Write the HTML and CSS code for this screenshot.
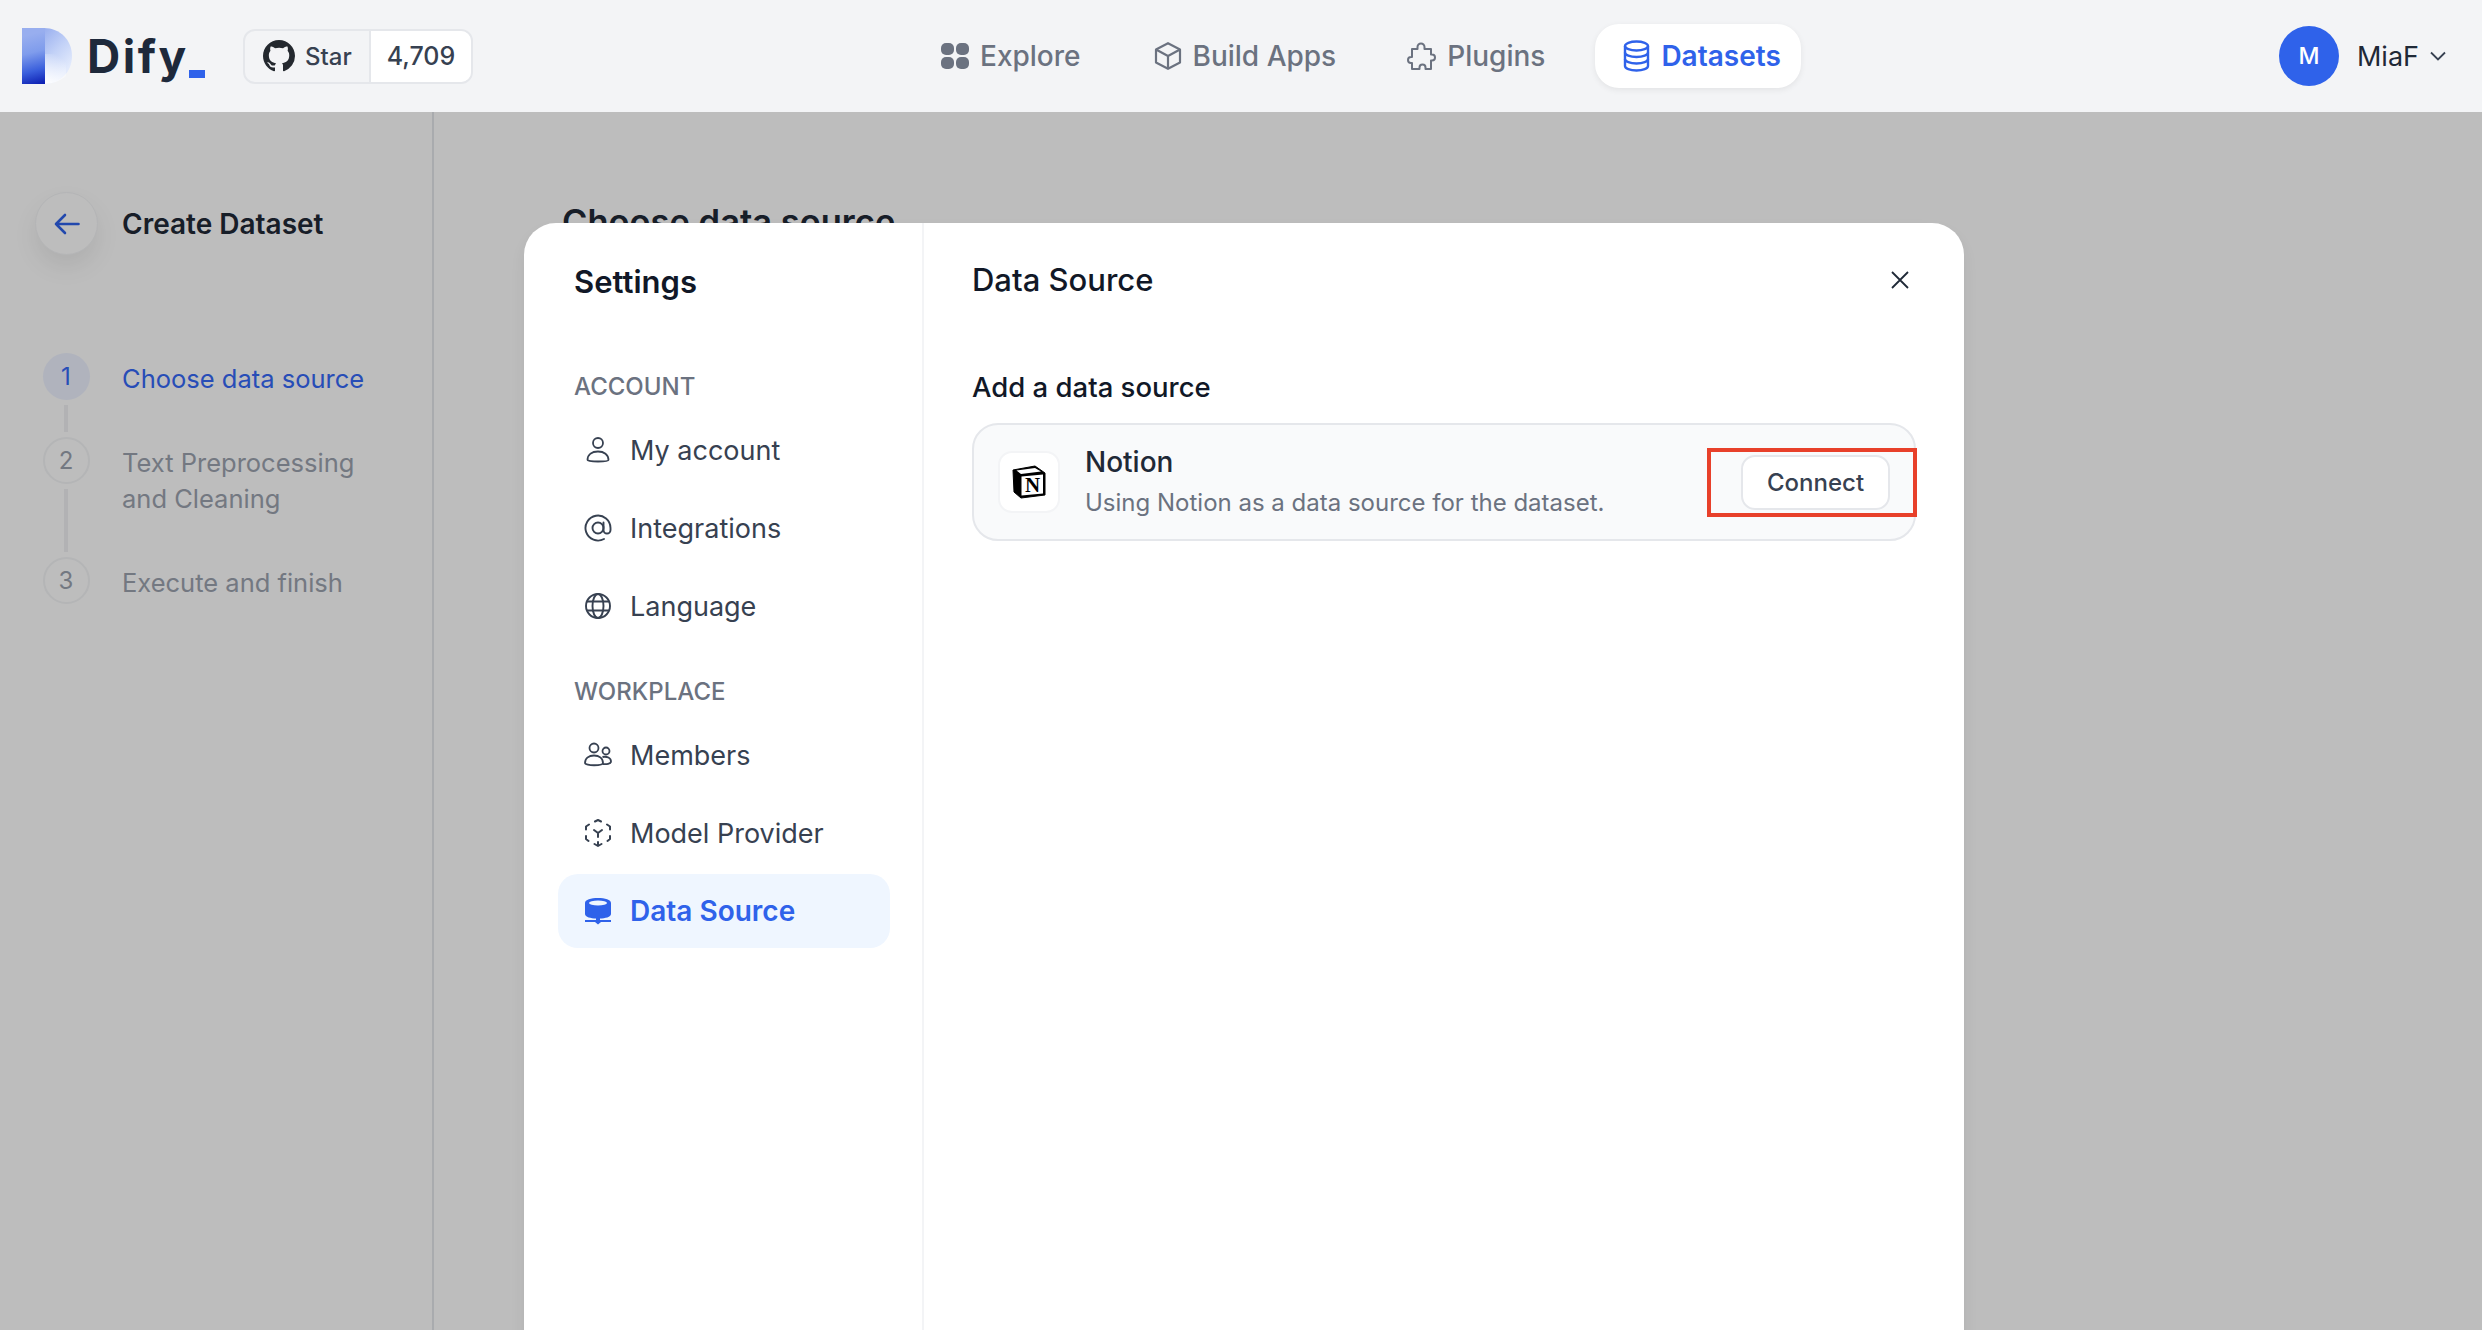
FILE: index.html
```html
<!DOCTYPE html>
<html lang="en">
  <head>
    <meta charset="UTF-8" />
    <meta name="viewport" content="width=device-width, initial-scale=1.0" />
    <title>Dify</title>
    <link rel="stylesheet" href="styles.css">
  </head>
  <body>
    <header class="topbar">
      <div class="logo">
        <svg class="logo-mark" viewBox="0 0 50 56">
          <defs>
            <linearGradient id="logoBowl" gradientUnits="userSpaceOnUse" x1="18" y1="4" x2="50" y2="36">
              <stop offset="0" stop-color="#98aeef" />
              <stop offset="0.55" stop-color="#c3d2f7" />
              <stop offset="1" stop-color="#e2eafc" />
            </linearGradient>
            <linearGradient id="logoStem" gradientUnits="userSpaceOnUse" x1="23" y1="56" x2="10" y2="6">
              <stop offset="0" stop-color="#0a1cb0" />
              <stop offset="0.3" stop-color="#3a5fdc" />
              <stop offset="0.65" stop-color="#7f9cec" />
              <stop offset="1" stop-color="#98aeef" />
            </linearGradient>
            <linearGradient id="logoFade" gradientUnits="userSpaceOnUse" x1="24" y1="56" x2="42" y2="32">
              <stop offset="0" stop-color="#fff" />
              <stop offset="1" stop-color="#fff" stop-opacity="0" />
            </linearGradient>
          </defs>
          <path d="M0 0H22C38 0 50 12 50 28S38 56 22 56H0Z" fill="url(#logoBowl)" />
          <path d="M23 26H44V48C38 53 30 56 22 56H23Z" fill="url(#logoFade)" />
          <path d="M0 0H23V56H0Z" fill="url(#logoStem)" />
        </svg>
        <span class="logo-word">Dify</span><span class="logo-dash"></span>
      </div>
      <div class="star-box">
        <div class="star-label">
          <svg class="github-icon" viewBox="0 0 16 16"><path fill="#24292f" d="M8 0C3.58 0 0 3.58 0 8c0 3.54 2.29 6.53 5.47 7.59.4.07.55-.17.55-.38 0-.19-.01-.82-.01-1.49-2.01.37-2.53-.49-2.69-.94-.09-.23-.48-.94-.82-1.13-.28-.15-.68-.52-.01-.53.63-.01 1.08.58 1.23.82.72 1.21 1.87.87 2.33.66.07-.52.28-.87.51-1.07-1.78-.2-3.64-.89-3.64-3.95 0-.87.31-1.59.82-2.15-.08-.2-.36-1.02.08-2.12 0 0 .67-.21 2.2.82.64-.18 1.32-.27 2-.27s1.36.09 2 .27c1.53-1.04 2.2-.82 2.2-.82.44 1.1.16 1.92.08 2.12.51.56.82 1.27.82 2.15 0 3.07-1.87 3.75-3.65 3.95.29.25.54.73.54 1.48 0 1.07-.01 1.93-.01 2.2 0 .21.15.46.55.38A8.01 8.01 0 0 0 16 8c0-4.42-3.58-8-8-8z"/></svg>
          <span>Star</span>
        </div>
        <div class="star-count">4,709</div>
      </div>
      <nav class="main-nav">
        <a class="nav-item">
          <svg class="nav-icon" viewBox="0 0 28 28" fill="#6b7280"><rect x="0" y="1" width="13" height="12" rx="5"/><rect x="15" y="1" width="13" height="12" rx="5"/><rect x="0" y="15" width="13" height="12" rx="5"/><rect x="15" y="15" width="13" height="12" rx="5"/></svg>
          Explore
        </a>
        <a class="nav-item nav-item-build">
          <svg class="nav-icon" viewBox="0 0 28 28" fill="none" stroke="#6b7280" stroke-width="2.2" stroke-linejoin="round"><path d="M14 1.2 26 7.5V20.5L14 26.8 2 20.5V7.5Z"/><path d="M2 7.5 14 14 26 7.5M14 14V26.8"/></svg>
          Build Apps
        </a>
        <a class="nav-item">
          <svg class="nav-icon nav-icon-plugin" viewBox="0 0 30 31" fill="none" stroke="#6b7280" stroke-width="2" stroke-linejoin="round"><path d="M6 8H11.5V6a3.5 3.5 0 0 1 7 0V8H25V13.5H26a3 3 0 0 1 0 6H25V28H19.500V26.500a3 3 0 0 0-6 0V28H6V22H5a3 3 0 0 1 0-6H6Z"/></svg>
          Plugins
        </a>
        <a class="nav-item nav-item-active">
          <svg class="nav-icon nav-icon-db" viewBox="0 0 27 32" fill="none" stroke="#2f62ea" stroke-width="2.4"><ellipse cx="13.5" cy="6" rx="11.5" ry="4.5"/><path d="M2 6V26C2 28.5 7 30.5 13.5 30.5S25 28.5 25 26V6"/><path d="M2 12.5C2 15 7 17 13.5 17S25 15 25 12.5M2 19C2 21.5 7 23.5 13.5 23.5S25 21.5 25 19"/></svg>
          Datasets
        </a>
      </nav>
      <div class="user-menu">
        <div class="avatar">M</div>
        <span class="user-name">MiaF</span>
        <svg class="chevron" viewBox="0 0 16 10" fill="none" stroke="#374151" stroke-width="1.8"><path d="M1 1.5 8 8.5 15 1.5"/></svg>
      </div>
    </header>

    <main class="page">
      <aside class="sidebar">
        <div class="back-row">
          <div class="back-btn">
            <svg viewBox="0 0 26 22" fill="none" stroke="#2f62ea" stroke-width="2.6" stroke-linecap="round" stroke-linejoin="round"><path d="M24.5 11H2M11 2 2 11 11 20"/></svg>
          </div>
          <span class="back-title">Create Dataset</span>
        </div>
        <div class="steps">
          <div class="step">
            <div class="step-rail"><div class="step-num step-num-active">1</div><div class="step-line"></div></div>
            <div class="step-text step-text-active">Choose data source</div>
          </div>
          <div class="step step-long">
            <div class="step-rail"><div class="step-num">2</div><div class="step-line"></div></div>
            <div class="step-text">Text Preprocessing<br>and Cleaning</div>
          </div>
          <div class="step">
            <div class="step-rail"><div class="step-num">3</div></div>
            <div class="step-text">Execute and finish</div>
          </div>
        </div>
      </aside>
      <section class="content">
        <h2 class="content-title">Choose data source</h2>
      </section>

      <div class="overlay">
        <div class="modal">
          <div class="modal-nav">
            <h3 class="modal-nav-title">Settings</h3>
            <div class="group-label group-label-first">ACCOUNT</div>
            <a class="menu-item">
              <svg class="menu-icon" viewBox="0 0 28 28" fill="none" stroke="#374151" stroke-width="1.8"><circle cx="14" cy="7" r="5"/><path d="M3.5 24C3.5 18.5 8 15.5 14 15.5S24.5 18.5 24.5 24C24.5 26 3.5 26 3.5 24Z"/></svg>
              My account
            </a>
            <a class="menu-item">
              <svg class="menu-icon" viewBox="0 0 28 28" fill="none" stroke="#374151" stroke-width="1.9" stroke-linecap="round"><circle cx="14" cy="14" r="5.5"/><path d="M19.5 8.5V16a3.5 3.5 0 0 0 7 0V14A12.5 12.5 0 1 0 20 25"/></svg>
              Integrations
            </a>
            <a class="menu-item">
              <svg class="menu-icon" viewBox="0 0 28 28" fill="none" stroke="#374151" stroke-width="1.9"><circle cx="14" cy="14" r="12"/><ellipse cx="14" cy="14" rx="5.5" ry="12"/><path d="M3 9.5H25M3 18.5H25"/></svg>
              Language
            </a>
            <div class="group-label">WORKPLACE</div>
            <a class="menu-item">
              <svg class="menu-icon" viewBox="0 0 28 28" fill="none" stroke="#374151" stroke-width="1.8"><circle cx="10" cy="7" r="4.5"/><circle cx="22" cy="10" r="3.5"/><path d="M1 22C1 17 5 14.5 10 14.5S19 17 19 22C19 25 1 25 1 22Z"/><path d="M18.5 16C23 15 27 17 27 20.5C27 23 22 23.5 19 23"/></svg>
              Members
            </a>
            <a class="menu-item">
              <svg class="menu-icon" viewBox="0 0 28 28" fill="none" stroke="#374151" stroke-width="2" stroke-linecap="round" stroke-linejoin="round"><path d="M11 2.5 14 1 17 2.5M23 5.5 26 7.5V10.5M26 17V20L23.5 22M2 17V20L4.5 22M2 10.5V7.5L5 5.5M10.5 25 14 27 17.5 25M14 27V23"/><path d="M10 11 14 14 18 11M14 14V18"/></svg>
              Model Provider
            </a>
            <a class="menu-item menu-item-active">
              <svg class="menu-icon" viewBox="0 0 28 28" fill="#2f62ea"><path d="M1 6C1 2.5 7 1 14 1S27 2.5 27 6V17C27 20 21 21.5 16 21.5V23H27V25H17L14 27.5 11 25H1V23H12V21.5C7 21.5 1 20 1 17Z"/><ellipse cx="14" cy="6" rx="9" ry="2.5" fill="#eff6ff"/></svg>
              Data Source
            </a>
          </div>
          <div class="modal-body">
            <div class="modal-head">
              <h3 class="modal-title">Data Source</h3>
              <svg class="close-icon" viewBox="0 0 18 18" fill="none" stroke="#1f2937" stroke-width="1.8"><path d="M1 1 17 17M17 1 1 17"/></svg>
            </div>
            <div class="section-title">Add a data source</div>
            <div class="source-card">
              <div class="source-logo">
                <svg viewBox="0 0 34 34">
                  <path d="M1 5 23 1 33 8V30L9 33 2 27Z" fill="#000" stroke="#000" stroke-linejoin="round"/>
                  <path d="M4.5 5.5 23 3 29 6.5 9 9Z" fill="#fff"/>
                  <path d="M9.5 11.5 31 9.5V28.5L9.5 30.5Z" fill="#fff"/>
                  <text x="20.5" y="27" class="notion-n">N</text>
                </svg>
              </div>
              <div class="source-info">
                <div class="source-name">Notion</div>
                <div class="source-desc">Using Notion as a data source for the dataset.</div>
              </div>
              <div class="connect-btn">Connect</div>
              <div class="highlight-box"></div>
            </div>
          </div>
        </div>
      </div>
    </main>
  </body>
</html>
```

FILE: styles.css
```css
* {
  box-sizing: border-box;
}

html,
body {
  height: 100%;
}

body {
  margin: 0;
  display: flex;
  flex-direction: column;
  overflow: hidden;
  font-family: Inter, "Noto Sans", sans-serif;
  color: #1f2937;
  background: #fff;
}

svg {
  display: block;
  flex-shrink: 0;
}

/* top bar */
.topbar {
  height: 112px;
  flex-shrink: 0;
  display: flex;
  align-items: center;
  padding-left: 22px;
  background: #f3f4f6;
}

.logo {
  display: flex;
  align-items: flex-end;
  width: 221px;
}

.logo-mark {
  width: 50px;
  height: 56px;
}

.logo-word {
  margin-left: 15px;
  font-size: 46px;
  line-height: 56px;
  font-weight: 700;
  letter-spacing: 2.5px;
  color: #1e293b;
}

.logo-dash {
  width: 16px;
  height: 8px;
  margin: 0 0 6px 0;
  background: #2f62ea;
}

.star-box {
  width: 230px;
  height: 55px;
  display: flex;
  border: 2px solid #e5e7eb;
  border-radius: 12px;
  overflow: hidden;
  font-size: 24px;
  font-weight: 500;
  color: #374151;
}

.star-label {
  width: 126px;
  display: flex;
  align-items: center;
  gap: 10px;
  padding-left: 18px;
  border-right: 2px solid #e5e7eb;
}

.github-icon {
  width: 32px;
  height: 32px;
}

.star-count {
  flex: 1;
  display: flex;
  align-items: center;
  justify-content: center;
  background: #fff;
  font-size: 25px;
}

.main-nav {
  display: flex;
  align-items: center;
  margin-left: 446px;
  gap: 26px;
}

.nav-item {
  height: 64px;
  display: flex;
  align-items: center;
  gap: 11px;
  padding: 0 22px;
  border-radius: 24px;
  font-size: 28px;
  font-weight: 500;
  color: #6b7280;
}

.nav-item-build {
  margin-left: 3px;
}

.nav-item-active {
  margin-left: 2px;
  padding: 0 20px 0 28px;
  background: #fff;
  color: #2f62ea;
  font-weight: 600;
  box-shadow: 0 2px 6px rgba(0, 0, 0, 0.07);
}

.nav-icon {
  width: 28px;
  height: 28px;
}

.nav-icon-plugin {
  width: 30px;
  height: 31px;
}

.nav-icon-db {
  width: 27px;
  height: 32px;
}

.user-menu {
  display: flex;
  align-items: center;
  margin-left: auto;
  padding-right: 36px;
}

.avatar {
  width: 60px;
  height: 60px;
  display: flex;
  align-items: center;
  justify-content: center;
  border-radius: 50%;
  background: #2f62ea;
  color: #fff;
  font-size: 23px;
  font-weight: 500;
}

.user-name {
  margin-left: 18px;
  font-size: 27px;
  color: #1f2937;
}

.chevron {
  width: 16px;
  height: 10px;
  margin-left: 11px;
}

/* page under the dialog */
.page {
  flex: 1;
  display: flex;
  position: relative;
  overflow: hidden;
  min-height: 0;
}

.sidebar {
  width: 434px;
  flex-shrink: 0;
  padding: 80px 0 0 35px;
  border-right: 2px solid #e5e7eb;
}

.back-row {
  display: flex;
  align-items: center;
  gap: 24px;
}

.back-btn {
  width: 63px;
  height: 63px;
  display: flex;
  align-items: center;
  justify-content: center;
  border: 1px solid #f3f4f6;
  border-radius: 50%;
  background: #fff;
  box-shadow: 0 12px 24px rgba(0, 0, 0, 0.08);
}

.back-btn svg {
  width: 26px;
  height: 22px;
}

.back-title {
  font-size: 28px;
  font-weight: 600;
}

.steps {
  margin-top: 98px;
}

.step {
  display: flex;
  height: 84px;
  margin-left: 7px;
}

.step-long {
  height: 120px;
}

.step-rail {
  width: 48px;
  display: flex;
  flex-direction: column;
  align-items: center;
}

.step-num {
  width: 47px;
  height: 47px;
  flex-shrink: 0;
  display: flex;
  align-items: center;
  justify-content: center;
  border: 2px solid #f3f4f6;
  border-radius: 50%;
  font-size: 24px;
  color: #9ca3af;
}

.step-num-active {
  border: 0;
  background: #eef2ff;
  color: #3568f7;
}

.step-line {
  flex: 1;
  width: 4px;
  margin: 5px 0;
  background: #f0f1f3;
}

.step-text {
  margin-left: 32px;
  padding-top: 8px;
  font-size: 25.5px;
  line-height: 36px;
  color: #9ca3af;
}

.step-text-active {
  color: #3568f7;
}

.content {
  flex: 1;
  padding: 0 128px;
}

.content-title {
  margin: 88px 0 0;
  font-size: 34.5px;
  line-height: 44px;
  font-weight: 600;
}

/* dialog */
.overlay {
  position: absolute;
  inset: 0;
  background: rgba(0, 0, 0, 0.26);
}

.modal {
  position: absolute;
  top: 111px;
  left: 524px;
  width: 1440px;
  height: 1300px;
  display: flex;
  border-radius: 32px;
  background: #fff;
  box-shadow: 0 8px 16px rgba(0, 0, 0, 0.06);
}

.modal-nav {
  width: 400px;
  flex-shrink: 0;
  padding: 35px 32px 0 34px;
  border-right: 2px solid #f3f4f6;
}

.modal-nav-title {
  margin: 0 0 0 16px;
  font-size: 31px;
  line-height: 48px;
  font-weight: 600;
  color: #111827;
}

.group-label {
  margin: 31px 0 0 16px;
  font-size: 24px;
  line-height: 36px;
  font-weight: 500;
  color: #6b7280;
}

.group-label-first {
  margin-top: 63px;
}

.menu-item {
  height: 74px;
  margin-top: 4px;
  display: flex;
  align-items: center;
  gap: 18px;
  padding-left: 26px;
  border-radius: 20px;
  font-size: 27px;
  color: #374151;
}

.group-label + .menu-item {
  margin-top: 8px;
}

.menu-item-active {
  background: #eff6ff;
  color: #2f62ea;
  font-size: 28px;
  font-weight: 600;
}

.menu-icon {
  width: 28px;
  height: 28px;
}

.modal-body {
  flex: 1;
  padding: 34px 48px 0 48px;
}

.modal-head {
  display: flex;
  align-items: center;
  justify-content: space-between;
}

.modal-title {
  margin: 0;
  font-size: 31px;
  line-height: 46px;
  font-weight: 500;
  color: #111827;
}

.close-icon {
  width: 18px;
  height: 18px;
  margin-right: 7px;
}

.section-title {
  margin-top: 66px;
  font-size: 27.5px;
  line-height: 36px;
  font-weight: 500;
  color: #111827;
}

.source-card {
  position: relative;
  height: 118px;
  margin-top: 18px;
  display: flex;
  align-items: center;
  padding: 0 24px;
  border: 2px solid #e5e7eb;
  border-radius: 26px;
  background: #f9fafb;
}

.source-logo {
  width: 62px;
  height: 62px;
  display: flex;
  align-items: center;
  justify-content: center;
  border: 2px solid #f3f4f6;
  border-radius: 14px;
  background: #fff;
}

.source-logo svg {
  width: 34px;
  height: 34px;
}

.notion-n {
  font-family: "Liberation Serif", serif;
  font-size: 21px;
  font-weight: 700;
  text-anchor: middle;
  fill: #000;
}

.source-info {
  margin-left: 25px;
}

.source-name {
  font-size: 28px;
  line-height: 36px;
  font-weight: 500;
}

.source-desc {
  margin-top: 5px;
  font-size: 24px;
  line-height: 36px;
  color: #6b7280;
}

.connect-btn {
  width: 149px;
  height: 55px;
  margin-left: auto;
  display: flex;
  align-items: center;
  justify-content: center;
  border: 2px solid #e5e7eb;
  border-radius: 14px;
  background: #fff;
  font-size: 24px;
  font-weight: 500;
  color: #374151;
}

.highlight-box {
  position: absolute;
  top: 23px;
  right: -3px;
  width: 210px;
  height: 69px;
  border: 4px solid #e8402a;
}
```
